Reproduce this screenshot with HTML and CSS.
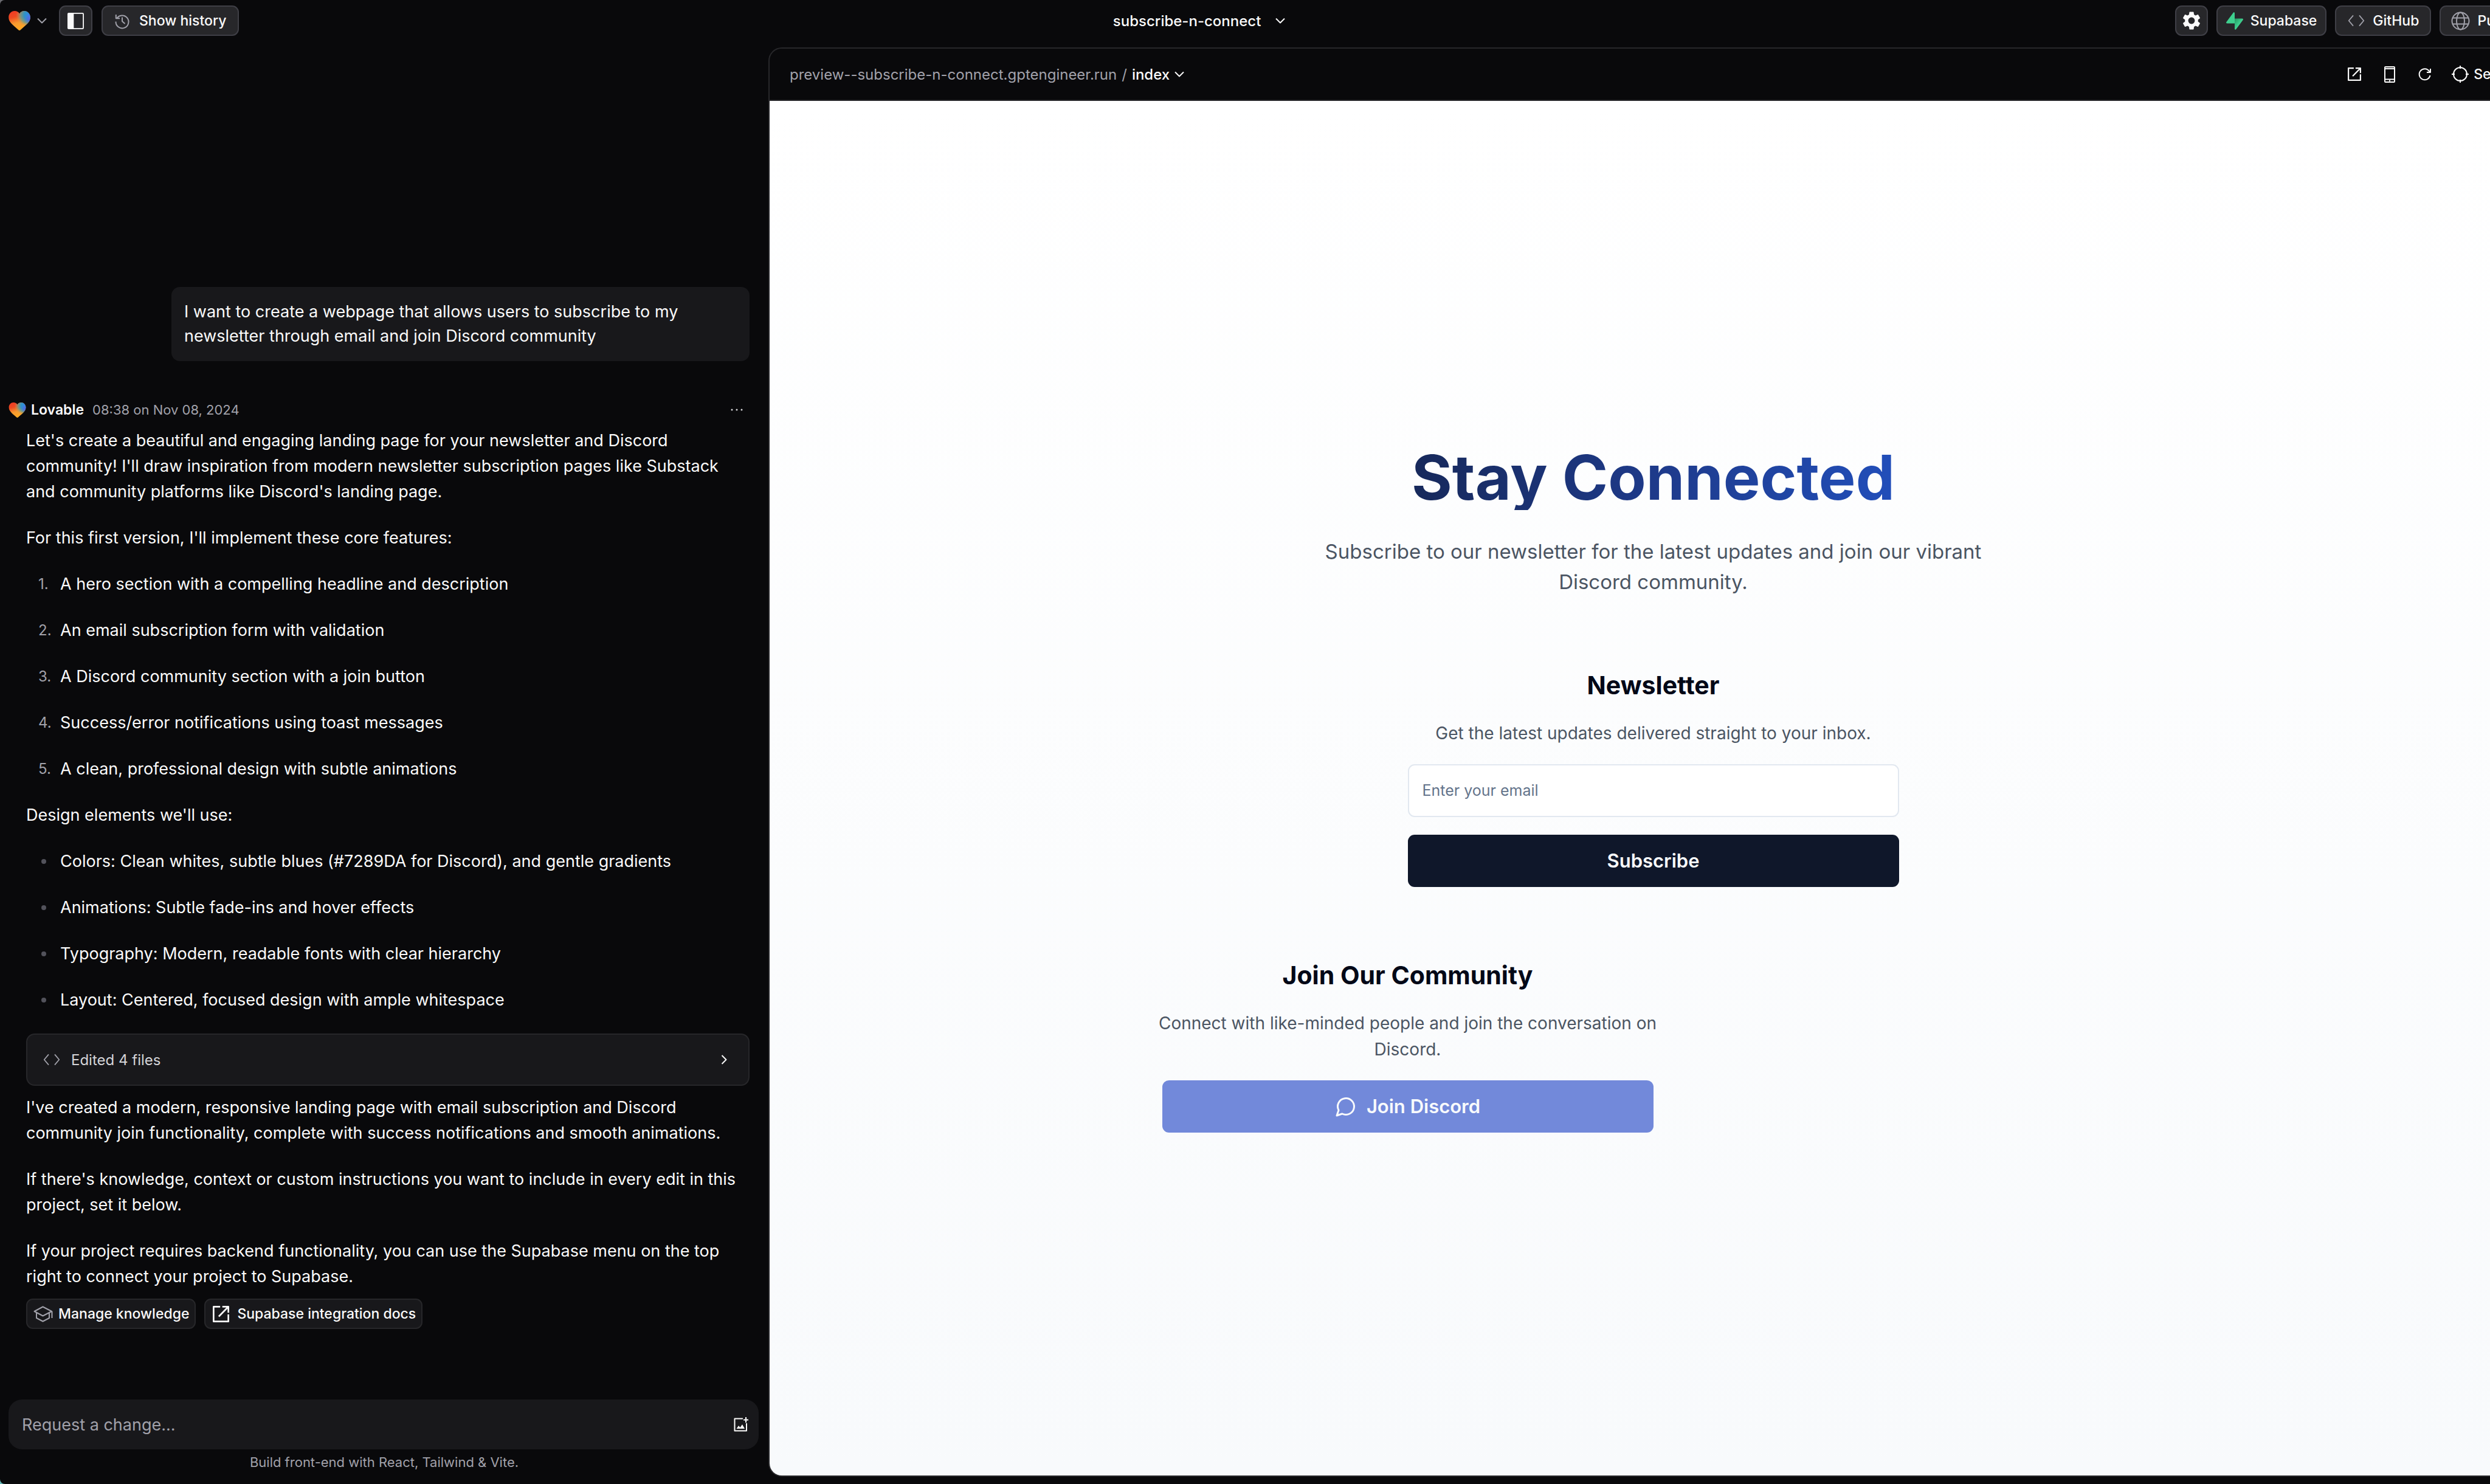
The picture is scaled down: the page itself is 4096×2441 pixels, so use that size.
FILE: index.html
```html
<!DOCTYPE html>
<html lang="en">
<head>
<meta charset="utf-8">
<title>subscribe-n-connect</title>
<link rel="stylesheet" href="styles.css">
</head>
<body>
<svg class="defs" aria-hidden="true">
  <defs>
    <linearGradient id="heart-base" x1="0.2" y1="0" x2="0.5" y2="1">
      <stop offset="0" stop-color="#ef3b24"/><stop offset="0.3" stop-color="#ef4a22"/><stop offset="0.62" stop-color="#f79a30"/><stop offset="1" stop-color="#ffab22"/>
    </linearGradient>
    <radialGradient id="heart-blue" cx="0.96" cy="0.22" r="0.62">
      <stop offset="0" stop-color="#2f86ea"/><stop offset="0.4" stop-color="#2f93c4"/><stop offset="0.68" stop-color="#6f9c88" stop-opacity="0.85"/><stop offset="1" stop-color="#d79a50" stop-opacity="0"/>
    </radialGradient>
    <radialGradient id="heart-violet" cx="1" cy="0.42" r="0.3">
      <stop offset="0" stop-color="#5a5ce6"/><stop offset="1" stop-color="#5a6ce6" stop-opacity="0"/>
    </radialGradient>
    <linearGradient id="bolt-shade" x1="0" y1="0" x2="1" y2="1">
      <stop offset="0" stop-color="#249361"/><stop offset="0.5" stop-color="#3ecf8e"/>
    </linearGradient>
    <symbol id="heart" viewBox="0 0 40 36">
      <g>
        <path fill="url(#heart-base)" d="M20 36c-.8 0-1.500-.6-2.500-1.500C6 24.500 0 20 0 11.500 0 5 5 0 11 0c4 0 7.300 2 9 5 1.700-3 5-5 9-5 6 0 11 5 11 11.500 0 8.500-6 13-17.500 23-1 .9-1.700 1.500-2.500 1.500z"/>
        <path fill="url(#heart-blue)" d="M20 36c-.8 0-1.500-.6-2.500-1.500C6 24.500 0 20 0 11.500 0 5 5 0 11 0c4 0 7.300 2 9 5 1.700-3 5-5 9-5 6 0 11 5 11 11.500 0 8.500-6 13-17.500 23-1 .9-1.700 1.500-2.500 1.500z"/>
        <path fill="url(#heart-violet)" d="M20 36c-.8 0-1.500-.6-2.500-1.500C6 24.500 0 20 0 11.500 0 5 5 0 11 0c4 0 7.300 2 9 5 1.700-3 5-5 9-5 6 0 11 5 11 11.500 0 8.500-6 13-17.500 23-1 .9-1.700 1.500-2.500 1.500z"/>
      </g>
    </symbol>
    <symbol id="chevron-down" viewBox="0 0 16 16"><path class="line" d="M1 4.500l7 7 7-7"/></symbol>
    <symbol id="chevron-right" viewBox="0 0 16 16"><path class="line" d="M4.500 1l7 7-7 7"/></symbol>
    <symbol id="code" viewBox="0 0 30 22"><path class="line" d="M9.500 1.500L1.500 11l8 9.500M20.500 1.500l8 9.500-8 9.500"/></symbol>
    <symbol id="open" viewBox="0 0 30 30"><path class="line thick" d="M13.500 1.500h-12v27h27V15.500M28.500 12.500v-11h-11M28 2L11 19.500"/></symbol>
  </defs>
</svg>

<div class="app">
  <header class="topbar">
    <div class="group left">
      <button class="plain home" type="button" aria-label="Home menu">
        <svg class="heart"><use href="#heart"/></svg>
        <svg class="chev muted"><use href="#chevron-down"/></svg>
      </button>
      <button class="btn square" type="button" aria-label="Toggle sidebar">
        <svg class="i27" viewBox="0 0 30 30"><rect x="1" y="1" width="28" height="28" rx="1.500" fill="none" stroke="#fafafa" stroke-width="2"/><rect x="0.500" y="0.500" width="11" height="29" rx="1.500" fill="#fafafa"/></svg>
      </button>
      <button class="btn history" type="button">
        <svg class="i24 muted" viewBox="0 0 24 24"><path class="line" d="M3 8.500a10.500 10.500 0 1 1-1.500 5M1.800 2v6.200H8M12 6.500V13l4.500 4"/></svg>
        Show history
      </button>
    </div>
    <button class="plain title" type="button">subscribe-n-connect <svg class="chev"><use href="#chevron-down"/></svg></button>
    <div class="group right">
      <button class="btn gear" type="button" aria-label="Settings">
        <svg class="i30" viewBox="2 2 20 20"><path fill="#fafafa" d="M19.140 12.940c.04-.3.06-.61.06-.94 0-.32-.02-.64-.07-.94l2.030-1.580c.18-.14.23-.41.12-.61l-1.920-3.320c-.12-.22-.37-.29-.59-.22l-2.390.96c-.5-.38-1.030-.7-1.620-.94l-.36-2.540c-.04-.24-.24-.41-.48-.41h-3.840c-.24 0-.43.17-.47.41l-.36 2.540c-.59.24-1.130.57-1.620.94l-2.390-.96c-.22-.08-.47 0-.59.22L2.740 8.870c-.12.21-.08.47.12.61l2.030 1.580c-.05.3-.09.63-.09.94s.02.64.07.94l-2.030 1.580c-.18.14-.23.41-.12.61l1.920 3.320c.12.22.37.29.59.22l2.390-.96c.5.38 1.030.7 1.620.94l.36 2.540c.05.24.24.41.48.41h3.840c.24 0 .44-.17.47-.41l.36-2.540c.59-.24 1.130-.56 1.620-.94l2.390.96c.22.08.47 0 .59-.22l1.920-3.320c.12-.22.07-.47-.12-.61l-2.010-1.580zM12 15.600c-1.980 0-3.600-1.620-3.600-3.600s1.620-3.600 3.600-3.600 3.600 1.620 3.600 3.600-1.620 3.600-3.600 3.600z"/></svg>
      </button>
      <button class="btn supabase" type="button">
        <svg class="bolt" viewBox="0 0 28 29"><path fill="url(#bolt-shade)" d="M16.200 28.200c-.7.900-2.200.4-2.200-.8V10.500h12.200c1.700 0 2.300 1.200 1.300 2.500z"/><path fill="#3ecf8e" d="M11.800.8c.7-.9 2.200-.4 2.200.8v16.900H1.800c-1.700 0-2.300-1.200-1.300-2.500z"/></svg>
        Supabase
      </button>
      <button class="btn github" type="button"><svg class="code muted"><use href="#code"/></svg>GitHub</button>
      <button class="btn publish" type="button">
        <svg class="i31 muted" viewBox="0 0 31 31"><g class="line"><circle cx="15.500" cy="15.500" r="14"/><ellipse cx="15.500" cy="15.500" rx="6.500" ry="14"/><path d="M2.500 10.500h26M2.500 20.500h26"/></g></svg>
        Publish
      </button>
    </div>
  </header>

  <div class="work">
    <aside class="chat">
      <div class="messages">
        <p class="bubble">I want to create a webpage that allows users to subscribe to my newsletter through email and join Discord community</p>

        <div class="meta">
          <svg class="heart small"><use href="#heart"/></svg>
          <strong class="author">Lovable</strong>
          <time class="time">08:38 on Nov 08, 2024</time>
          <button class="plain more" type="button" aria-label="More">
            <svg viewBox="0 0 20 4" width="20" height="4" fill="#d4d4d8"><circle cx="2" cy="2" r="1.500"/><circle cx="10" cy="2" r="1.500"/><circle cx="18" cy="2" r="1.500"/></svg>
          </button>
        </div>

        <div class="prose">
          <p>Let's create a beautiful and engaging landing page for your newsletter and Discord community! I'll draw inspiration from modern newsletter subscription pages like Substack and community platforms like Discord's landing page.</p>
          <p>For this first version, I'll implement these core features:</p>
          <ol>
            <li>A hero section with a compelling headline and description</li>
            <li>An email subscription form with validation</li>
            <li>A Discord community section with a join button</li>
            <li>Success/error notifications using toast messages</li>
            <li>A clean, professional design with subtle animations</li>
          </ol>
          <p>Design elements we'll use:</p>
          <ul>
            <li>Colors: Clean whites, subtle blues (#7289DA for Discord), and gentle gradients</li>
            <li>Animations: Subtle fade-ins and hover effects</li>
            <li>Typography: Modern, readable fonts with clear hierarchy</li>
            <li>Layout: Centered, focused design with ample whitespace</li>
          </ul>
        </div>

        <button class="edited" type="button">
          <svg class="code muted"><use href="#code"/></svg>
          <span>Edited 4 files</span>
          <svg class="chev"><use href="#chevron-right"/></svg>
        </button>

        <div class="prose">
          <p>I've created a modern, responsive landing page with email subscription and Discord community join functionality, complete with success notifications and smooth animations.</p>
          <p>If there's knowledge, context or custom instructions you want to include in every edit in this project, set it below.</p>
          <p>If your project requires backend functionality, you can use the Supabase menu on the top right to connect your project to Supabase.</p>
        </div>

        <div class="actions">
          <button class="btn dim" type="button">
            <svg class="cap muted" viewBox="0 0 32 27"><path class="line" d="M1.500 9L15.500 1.500 30 9l-14.500 7.500zM5 11.500v8.500l10.500 5.500 10.500-5.500v-8.500M30.500 9v11"/></svg>
            Manage knowledge
          </button>
          <a class="btn dim docs" href="#docs"><svg class="i27"><use href="#open"/></svg>Supabase integration docs</a>
        </div>
      </div>

      <form class="composer">
        <input class="prompt" type="text" placeholder="Request a change..." aria-label="Request a change">
        <button class="plain attach" type="button" aria-label="Attach image">
          <svg class="i24" viewBox="0 0 24 24"><path class="line" d="M15 2.500H1.500v20H21V10"/><path fill="#fafafa" d="M4.500 19l3.500-5 2.500 3 3.500-5 4 7zM19 0h2v3.500h3v2h-3V9h-2V5.500h-3v-2h3z"/></svg>
        </button>
      </form>
      <p class="footnote">Build front-end with React, Tailwind &amp; Vite.</p>
    </aside>

    <main class="preview">
      <div class="urlbar">
        <div class="url"><span>preview--subscribe-n-connect.gptengineer.run</span><span>/</span>
          <button class="plain route" type="button">index <svg class="chev"><use href="#chevron-down"/></svg></button>
        </div>
        <div class="tools">
          <button class="plain tool" type="button" aria-label="Open in new tab"><svg class="i22"><use href="#open"/></svg></button>
          <button class="plain tool" type="button" aria-label="Mobile view"><svg width="18" height="27" viewBox="0 0 18 27"><g class="line"><rect x="1" y="1" width="16" height="25" rx="1"/><path d="M1 4h16M1 21.500h16M8 23.800h2"/></g></svg></button>
          <button class="plain tool" type="button" aria-label="Reload"><svg width="20" height="20" viewBox="0 0 20 20"><path class="line" d="M18.500 12a9 9 0 1 1-1.500-7l2 2M19 1v6h-6"/></svg></button>
          <button class="plain select" type="button"><svg class="i30" viewBox="0 0 30 30"><g class="line"><circle cx="15" cy="15" r="11"/><path d="M15 1v5M15 24v5M1 15h5M24 15h5"/></g></svg>Select</button>
        </div>
      </div>

      <div class="site">
        <div class="container">
          <h1 class="hero">Stay Connected</h1>
          <p class="lead">Subscribe to our newsletter for the latest updates and join our vibrant<br>Discord community.</p>
          <form class="card newsletter">
            <h2>Newsletter</h2>
            <p>Get the latest updates delivered straight to your inbox.</p>
            <input class="email" type="email" placeholder="Enter your email" aria-label="Email">
            <button class="cta dark" type="submit">Subscribe</button>
          </form>
          <section class="card">
            <h2>Join Our Community</h2>
            <p>Connect with like-minded people and join the conversation on<br>Discord.</p>
            <button class="cta discord" type="button">
              <svg class="i36" viewBox="0 0 24 24"><path class="line" d="M7.900 20A9 9 0 1 0 4 16.100L2 22Z"/></svg>
              Join Discord
            </button>
          </section>
        </div>
      </div>
    </main>
  </div>
</div>
</body>
</html>
```
FILE: styles.css
```css
* { box-sizing: border-box; }

html { background: linear-gradient(#6b6b70, #5fb5b5); }

body {
  margin: 0;
  overflow: hidden;
  font-family: Inter, "Liberation Sans", sans-serif;
  font-size: 24px;
  color: #fafafa;
}

p, h1, h2, ol, ul { margin: 0; padding: 0; }
button, input { font: inherit; color: inherit; }
svg { flex: none; display: block; overflow: visible; }

.defs { position: absolute; width: 0; height: 0; }
.line { fill: none; stroke: currentColor; stroke-width: 2; stroke-linejoin: round; }
.thick { stroke-width: 3; }
.muted { color: #a1a1aa; }

.i22 { width: 22px; height: 22px; }
.i24 { width: 24px; height: 24px; }
.i27 { width: 27px; height: 27px; }
.i30 { width: 30px; height: 30px; }
.i31 { width: 31px; height: 31px; }
.i36 { width: 36px; height: 36px; }
.chev { width: 16px; height: 16px; }
.code { width: 30px; height: 20px; }
.cap { width: 32px; height: 27px; }
.bolt { width: 28px; height: 29px; }
.heart { width: 36px; height: 32px; }
.heart.small { width: 29px; height: 25px; }

/* The shell runs past the right edge of the window */
.app {
  display: flex;
  flex-direction: column;
  width: calc(100% + 92px);
  height: 100vh;
  background: #09090b;
  border-radius: 8px;
}

.topbar {
  display: flex;
  align-items: center;
  justify-content: space-between;
  height: 78px;
  padding: 0 13px 10px 14px;
}
.group { display: flex; align-items: center; gap: 15px; }
.right { gap: 14px; }

.plain {
  display: flex;
  align-items: center;
  padding: 0;
  border: 0;
  background: none;
  font-weight: 500;
}
.home { gap: 11px; margin-right: 5px; }
.title { gap: 24px; padding-right: 26px; }

.btn {
  display: flex;
  align-items: center;
  gap: 12px;
  height: 50px;
  padding: 0 14px;
  border: 2px solid #3f3f46;
  border-radius: 11px;
  background: #27272a;
  color: #fafafa;
  font-size: 23px;
  font-weight: 500;
  text-decoration: none;
  white-space: nowrap;
}
.square { padding: 0 12px; }
.gear { padding: 0 10px; }
.history { gap: 16px; padding: 0 19px 0 20px; }
.github { padding: 0 18px; }
.publish { padding: 0 17px; }

.work {
  flex: 1;
  display: grid;
  grid-template-columns: 1264px 1fr;
  min-height: 0;
  padding: 0 13px 12px 0;
}

/* Conversation */
.chat { display: flex; flex-direction: column; min-height: 0; }
.messages {
  flex: 1;
  display: flex;
  flex-direction: column;
  justify-content: flex-end;
  padding: 0 31px 116px 43px;
}
.bubble {
  align-self: flex-end;
  width: 951px;
  padding: 21px;
  border-radius: 14px;
  background: #18181b;
  font-size: 27px;
  line-height: 40px;
}
.meta {
  display: flex;
  align-items: center;
  margin: 62px 11px 12px -29px;
  font-size: 23px;
  line-height: 36px;
}
.author { margin: 0 14px 0 8px; font-weight: 600; }
.time { color: #a1a1aa; font-size: 22px; }
.more { margin-left: auto; }

.prose { display: grid; gap: 34px; font-size: 27px; line-height: 42px; }
.prose ol, .prose ul { display: grid; gap: 34px; list-style: none; counter-reset: step; }
.prose li { display: flex; align-items: center; }
.prose ol li::before {
  counter-increment: step;
  content: counter(step) ".";
  width: 36px;
  margin-left: 20px;
  color: #a1a1aa;
  font-size: 24px;
}
.prose ul li::before {
  content: "";
  width: 8px;
  height: 8px;
  margin: 0 23px 0 25px;
  border-radius: 50%;
  background: #52525b;
}

.edited {
  display: flex;
  align-items: center;
  gap: 17px;
  height: 86px;
  margin: 34px 0 15px;
  padding: 0 32px 0 25px;
  border: 2px solid #27272a;
  border-radius: 14px;
  background: #18181b;
  color: #d4d4d8;
}
.edited span { margin-right: auto; }
.edited .chev { color: #fafafa; }

.actions { display: flex; gap: 14px; margin-top: 15px; }
.dim { gap: 9px; padding: 0 9px 0 10px; border-color: #27272a; background: #18181b; }
.docs { gap: 13px; padding-left: 12px; }

.composer {
  display: flex;
  align-items: center;
  height: 82px;
  margin: 0 16px 0 14px;
  padding: 0 17px 0 22px;
  border-radius: 22px;
  background: #18181b;
}
.prompt {
  flex: 1;
  padding: 0;
  border: 0;
  background: none;
  font-size: 27px;
}
.prompt::placeholder { color: #a1a1aa; opacity: 1; }
.footnote {
  padding: 5px 0 8px;
  color: #a1a1aa;
  font-size: 22px;
  line-height: 32px;
  text-align: center;
}

/* Preview frame */
.preview {
  display: flex;
  flex-direction: column;
  border: 2px solid #27272a;
  border-radius: 22px;
  overflow: hidden;
}
.urlbar {
  display: flex;
  align-items: center;
  justify-content: space-between;
  height: 86px;
  padding: 0 35px 0 33px;
  border-bottom: 2px solid #27272a;
}
.url { display: flex; align-items: center; gap: 8px; color: #a1a1aa; }
.route { gap: 8px; color: #fafafa; }
.tools { display: flex; align-items: center; gap: 28px; }
.tool { justify-content: center; width: 30px; height: 30px; }
.select { gap: 7px; font-size: 23px; }

/* Landing page shown in the preview */
.site {
  flex: 1;
  display: grid;
  place-items: center;
  background: linear-gradient(#ffffff, #f8fafc);
  color: #020817;
}
.container { width: 1616px; text-align: center; }
.hero {
  background: linear-gradient(90deg, #0f172a, #1e3a8a, #2563eb);
  background-clip: text;
  color: transparent;
  font-size: 102px;
  font-weight: 700;
  line-height: 108px;
}
.lead {
  width: 1212px;
  margin: 43px auto 0;
  color: #4b5563;
  font-size: 33px;
  line-height: 50px;
}
.card {
  display: flex;
  flex-direction: column;
  gap: 29px;
  width: 808px;
  margin-top: 116px;
}
.newsletter { margin-left: auto; margin-right: auto; }
.card h2 { font-size: 41px; font-weight: 700; line-height: 58px; }
.card p {
  align-self: center;
  color: #4b5563;
  font-size: 28px;
  line-height: 43px;
  white-space: nowrap;
}
.email {
  height: 87px;
  padding: 0 22px;
  border: 2px solid #e2e8f0;
  border-radius: 11px;
  background: #ffffff;
  font-size: 25px;
}
.email::placeholder { color: #64748b; opacity: 1; }
.cta {
  display: flex;
  align-items: center;
  justify-content: center;
  gap: 16px;
  height: 86px;
  border: 0;
  border-radius: 11px;
  color: #f8fafc;
  font-size: 31px;
  font-weight: 600;
}
.dark { background: #0f172a; }
.discord { background: #7289da; }
```
